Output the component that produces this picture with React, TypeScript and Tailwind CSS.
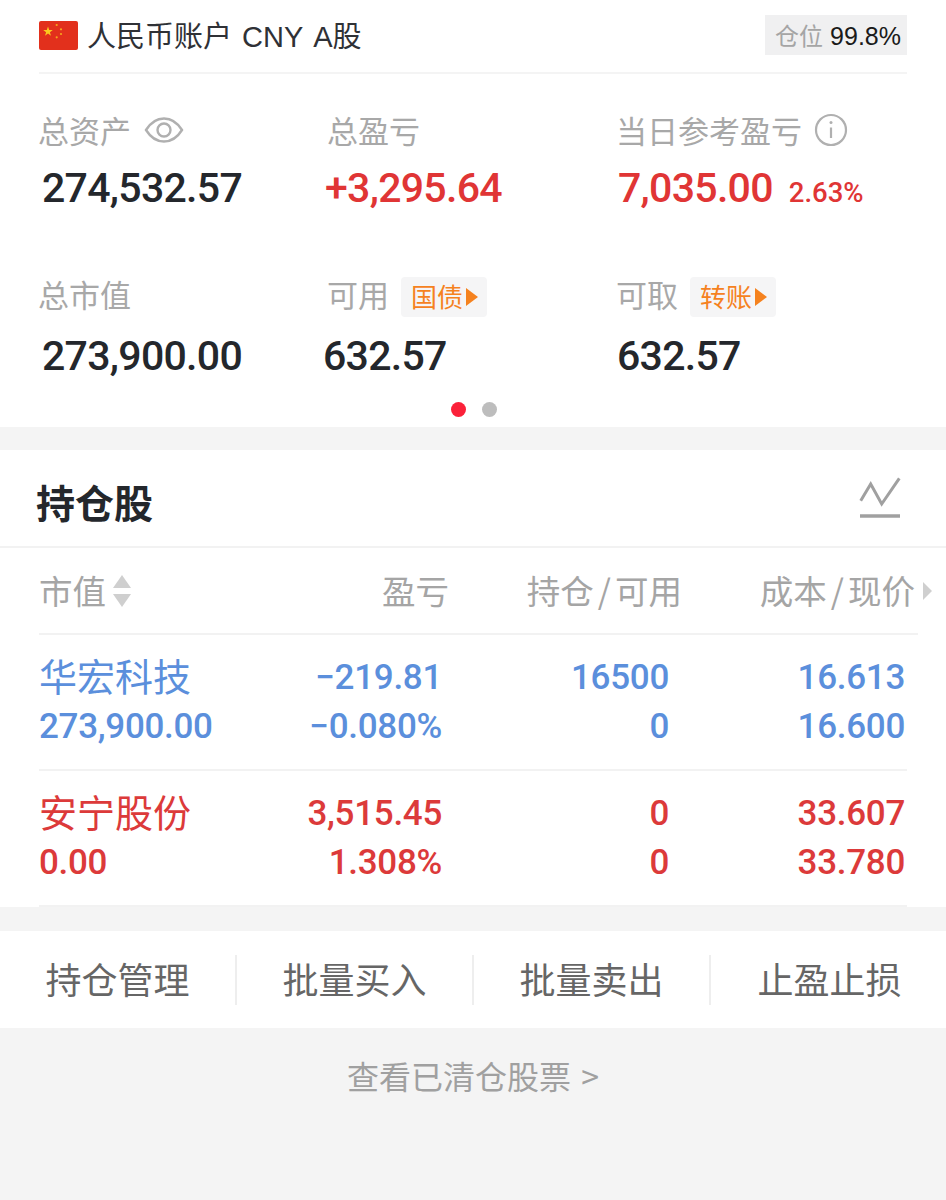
const cjk = "font-['Noto_Sans_CJK_SC','Noto_Sans',sans-serif]";
const num = "font-['Roboto','Noto_Sans_CJK_SC',sans-serif]";

function Flag() {
  return (
    <svg width="39" height="29" viewBox="0 0 39 29" className="shrink-0">
      <rect width="39" height="29" rx="2" fill="#e2301c" />
      <polygon points="9,5.5 10.2,9 13.8,9 10.9,11.2 12,14.7 9,12.6 6,14.7 7.1,11.2 4.2,9 7.8,9" fill="#fbc91e" />
      <circle cx="17.7" cy="4" r="1.1" fill="#f6a81c" />
      <circle cx="22" cy="8.3" r="1.1" fill="#f6a81c" />
      <circle cx="22" cy="13" r="1.1" fill="#f6a81c" />
      <circle cx="17.7" cy="16.3" r="1.1" fill="#f6a81c" />
    </svg>
  );
}

function Eye() {
  return (
    <svg width="40" height="30" viewBox="0 0 40 30" fill="none" stroke="#b0b0b0" strokeWidth="2.4">
      <path d="M2 15C7 7 13 3.5 20 3.5S33 7 38 15C33 23 27 26.5 20 26.5S7 23 2 15Z" />
      <circle cx="20" cy="15" r="6.5" />
    </svg>
  );
}

function Info() {
  return (
    <svg width="34" height="34" viewBox="0 0 34 34" fill="none" stroke="#b0b0b0">
      <circle cx="17" cy="17" r="15" strokeWidth="2.2" />
      <line x1="17" y1="14.5" x2="17" y2="25" strokeWidth="2.2" />
      <circle cx="17" cy="9.5" r="1.5" fill="#b0b0b0" stroke="none" />
    </svg>
  );
}

function Tag({ text }: { text: string }) {
  return (
    <span className={`ml-[12px] mt-[6px] flex h-[40px] items-center gap-[3px] rounded-[4px] bg-[#f5f5f6] pb-[4px] pl-[10px] pr-[9px] text-[26px] text-[#f5821f] ${cjk}`}>
      {text}
      <svg width="12" height="18" viewBox="0 0 12 18" className="mt-[4px]"><polygon points="0,0 12,9 0,18" fill="#f5821f" /></svg>
    </span>
  );
}

function Label({ children }: { children: React.ReactNode }) {
  return <span className={`text-[31px] leading-[40px] text-[#a8a8a8] ${cjk}`}>{children}</span>;
}

function Value({ children, red, className = "" }: { children: React.ReactNode; red?: boolean; className?: string }) {
  return (
    <span className={`${num} text-[41px] leading-[50px] font-medium tracking-[-0.7px] ${red ? "text-[#e03535]" : "text-[#24272c]"} ${className}`}>
      {children}
    </span>
  );
}

function Row({ name, v, pl, plp, h1, h2, c1, c2, color, border }: Record<string, any>) {
  const n = `text-right text-[35px] font-medium tracking-[-0.3px] ${num}`;
  return (
    <div className={`flex h-[136px] flex-col justify-center gap-[3px] pt-[2px] ${border ? "border-b-2 border-[#f2f2f2]" : ""} ${color}`}>
      <div className="flex h-[46px] items-center">
        <span className={`mb-[7px] w-[210px] text-[38px] leading-[46px] ${cjk}`}>{name}</span>
        <span className={`w-[193px] ${n}`}>{pl}</span>
        <span className={`w-[227px] ${n}`}>{h1}</span>
        <span className={`w-[236px] ${n}`}>{c1}</span>
      </div>
      <div className="flex h-[46px] items-center">
        <span className={`w-[210px] text-[35px] font-medium tracking-[-0.3px] ${num}`}>{v}</span>
        <span className={`w-[193px] ${n}`}>{plp}</span>
        <span className={`w-[227px] ${n}`}>{h2}</span>
        <span className={`w-[236px] ${n}`}>{c2}</span>
      </div>
    </div>
  );
}

function Action({ text, last }: { text: string; last?: boolean }) {
  return (
    <div className="flex w-[237px] shrink-0 items-center justify-center">
      <span className={`flex-1 pb-[4px] text-center text-[36px] text-[#666666] ${cjk}`}>{text}</span>
      {!last && <span className="h-[50px] w-[2px] bg-[#eeeeee]" />}
    </div>
  );
}

export default function App() {
  return (
    <div className="flex h-[1200px] w-[946px] flex-col overflow-hidden bg-[#f4f4f4]">
      <section className="h-[427px] bg-white px-[39px]">
        <div className="flex h-[74px] items-center justify-between border-b-2 border-[#f4f4f4] pb-[2px]">
          <div className="flex items-center gap-[9px] font-['Liberation_Sans','Noto_Sans_CJK_SC',sans-serif] text-[29px] text-[#2f3136]">
            <Flag />
            <span className="mt-[5px] flex">
              <span>人民币账户</span>
              <span className="ml-[10px]">CNY</span>
              <span className="ml-[10px]">A股</span>
            </span>
          </div>
          <div className="flex h-[40px] items-center gap-[7px] bg-[#f0f0f1] pl-[10px] pr-[6px] text-[24px]">
            <span className={`text-[#a5a5a5] ${cjk}`}>仓位</span>
            <span className="mt-[3px] font-['Liberation_Sans',sans-serif] text-[25px] text-[#1a1a1a]">99.8%</span>
          </div>
        </div>
        <div className="grid grid-cols-[288px_289px_1fr] pt-[36px]">
          <div className="flex flex-col">
            <div className="-ml-[1px] flex h-[40px] items-center gap-[13px]"><Label>总资产</Label><Eye /></div>
            <Value className="mt-[13px] ml-[3px]">274,532.57</Value>
          </div>
          <div className="flex flex-col">
            <div className="flex h-[40px] items-center"><Label>总盈亏</Label></div>
            <Value red className="mt-[13px] ml-[-2px]">+3,295.64</Value>
          </div>
          <div className="flex flex-col">
            <div className="flex h-[40px] items-center gap-[12px]"><Label>当日参考盈亏</Label><Info /></div>
            <div className="mt-[13px] ml-[2px] flex items-baseline gap-[16px]">
              <Value red>7,035.00</Value>
              <span className={`${num} text-[27.5px] font-medium text-[#e03535]`}>2.63%</span>
            </div>
          </div>
        </div>
        <div className="grid grid-cols-[288px_289px_1fr] pt-[61px]">
          <div className="flex flex-col">
            <div className="-ml-[1px] flex h-[40px] items-center"><Label>总市值</Label></div>
            <Value className="mt-[17px] ml-[3px]">273,900.00</Value>
          </div>
          <div className="flex flex-col">
            <div className="flex h-[40px] items-center"><Label>可用</Label><Tag text="国债" /></div>
            <Value className="mt-[17px] ml-[-4px]">632.57</Value>
          </div>
          <div className="flex flex-col">
            <div className="flex h-[40px] items-center"><Label>可取</Label><Tag text="转账" /></div>
            <Value className="mt-[17px] ml-[1px]">632.57</Value>
          </div>
        </div>
        <div className="ml-[1px] flex justify-center gap-[16px] pt-[21px]">
          <span className="h-[15px] w-[15px] rounded-full bg-[#fb2139]" />
          <span className="h-[15px] w-[15px] rounded-full bg-[#bdbdbd]" />
        </div>
      </section>

      <section className="mt-[23px] h-[457px] bg-white">
        <div className="flex h-[98px] items-center justify-between border-b-2 border-[#f2f2f2] pl-[36px] pr-[45px]">
          <span className={`mt-[6px] text-[39px] font-bold text-[#24272c] ${cjk}`}>持仓股</span>
          <svg width="42" height="42" viewBox="0 0 42 42" fill="none" stroke="#a0a0a0">
            <polyline points="1.7,23.7 11.7,7 22.7,27 40.3,1.3" strokeWidth="3" />
            <line x1="1" y1="39" x2="41" y2="39" strokeWidth="3.5" />
          </svg>
        </div>
        <div className="pl-[39px]">
          <div className={`flex h-[87px] w-[879px] items-center border-b-2 border-[#f2f2f2] text-[33.5px] text-[#a5a5a5] ${cjk}`}>
            <span className="flex w-[210px] shrink-0 items-center gap-[7px]">
              市值
              <svg width="18" height="32" viewBox="0 0 18 32"><polygon points="9,0 18,13 0,13" fill="#cfcfcf" /><polygon points="0,19 18,19 9,32" fill="#cfcfcf" /></svg>
            </span>
            <span className="w-[200px] shrink-0 text-right">盈亏</span>
            <span className="w-[233px] shrink-0 text-right">持仓<span className="mx-[4px]">/</span>可用</span>
            <span className="w-[233px] shrink-0 text-right">成本<span className="mx-[4px]">/</span>现价</span>
            <svg width="9" height="18" viewBox="0 0 9 18" className="ml-[8px] shrink-0"><polygon points="0,0 9,9 0,18" fill="#cfcfcf" /></svg>
          </div>
          <div className="w-[868px]">
            <Row border color="text-[#5b8fdc]" name="华宏科技" v="273,900.00" pl="−219.81" plp="−0.080%" h1="16500" h2="0" c1="16.613" c2="16.600" />
            <Row border color="text-[#dc3a3a]" name="安宁股份" v="0.00" pl="3,515.45" plp="1.308%" h1="0" h2="0" c1="33.607" c2="33.780" />
          </div>
        </div>
      </section>

      <section className="mt-[24px] flex h-[97px] items-center bg-white">
        <Action text="持仓管理" />
        <Action text="批量买入" />
        <Action text="批量卖出" />
        <Action text="止盈止损" last />
      </section>

      <div className={`flex justify-center gap-[10px] pt-[23px] text-[32px] text-[#a0a0a0] ${cjk}`}>
        <span>查看已清仓股票</span>
        <span>&gt;</span>
      </div>
    </div>
  );
}
